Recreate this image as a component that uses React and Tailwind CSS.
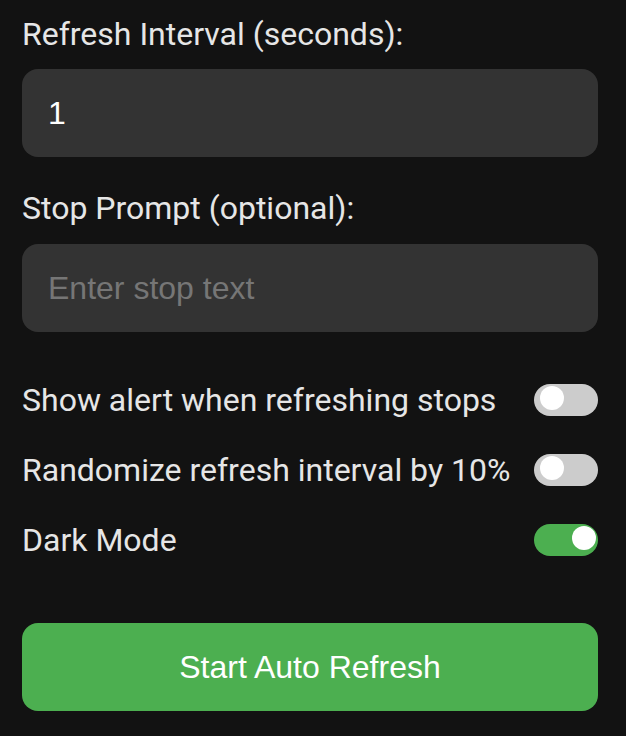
import React, { useState } from "react";

const labelClass =
  "block h-[40px] font-['Roboto',sans-serif] text-[32px] leading-[40px] text-[#e6e6e6]";

const inputClass =
  "block h-[88px] w-full rounded-[16px] bg-[#333333] px-[26px] font-['Liberation_Sans',Arial,sans-serif] text-[32px] text-white placeholder-[#767676] outline-none";

function Toggle({ on, onChange }) {
  return (
    <button
      type="button"
      onClick={onChange}
      className={`relative h-[32px] w-[64px] shrink-0 rounded-full ${
        on ? "bg-[#4caf50]" : "bg-[#cccccc]"
      }`}
    >
      <span
        className={`absolute top-[2px] h-[24px] w-[24px] rounded-full bg-white ${
          on ? "left-[38px]" : "left-[6px]"
        }`}
      />
    </button>
  );
}

export default function App() {
  const [interval, setInterval] = useState("1");
  const [stopText, setStopText] = useState("");
  const [alertOn, setAlertOn] = useState(false);
  const [randomize, setRandomize] = useState(false);
  const [dark, setDark] = useState(true);

  const rows = [
    ["Show alert when refreshing stops", alertOn, () => setAlertOn(!alertOn)],
    ["Randomize refresh interval by 10%", randomize, () => setRandomize(!randomize)],
    ["Dark Mode", dark, () => setDark(!dark)],
  ];

  return (
    <div className="min-h-[736px] w-full bg-[#121212] pl-[22px] pr-[28px] pt-[14px] pb-[25px]">
      <label className={labelClass}>Refresh Interval (seconds):</label>
      <input
        type="text"
        value={interval}
        onChange={(e) => setInterval(e.target.value)}
        className={`${inputClass} mt-[15px]`}
      />

      <label className={`${labelClass} mt-[31px]`}>Stop Prompt (optional):</label>
      <input
        type="text"
        value={stopText}
        placeholder="Enter stop text"
        onChange={(e) => setStopText(e.target.value)}
        className={`${inputClass} mt-[16px]`}
      />

      <div className="mt-[52px] flex flex-col gap-[38px]">
        {rows.map(([text, on, fn]) => (
          <div key={text} className="flex h-[32px] items-center justify-between">
            <span className="font-['Roboto',sans-serif] text-[32px] leading-[32px] text-[#e6e6e6]">
              {text}
            </span>
            <Toggle on={on} onChange={fn} />
          </div>
        ))}
      </div>

      <button
        type="button"
        className="mt-[67px] block h-[88px] w-full rounded-[16px] bg-[#4caf50] font-['Liberation_Sans',Arial,sans-serif] text-[32px] text-white"
      >
        Start Auto Refresh
      </button>
    </div>
  );
}
